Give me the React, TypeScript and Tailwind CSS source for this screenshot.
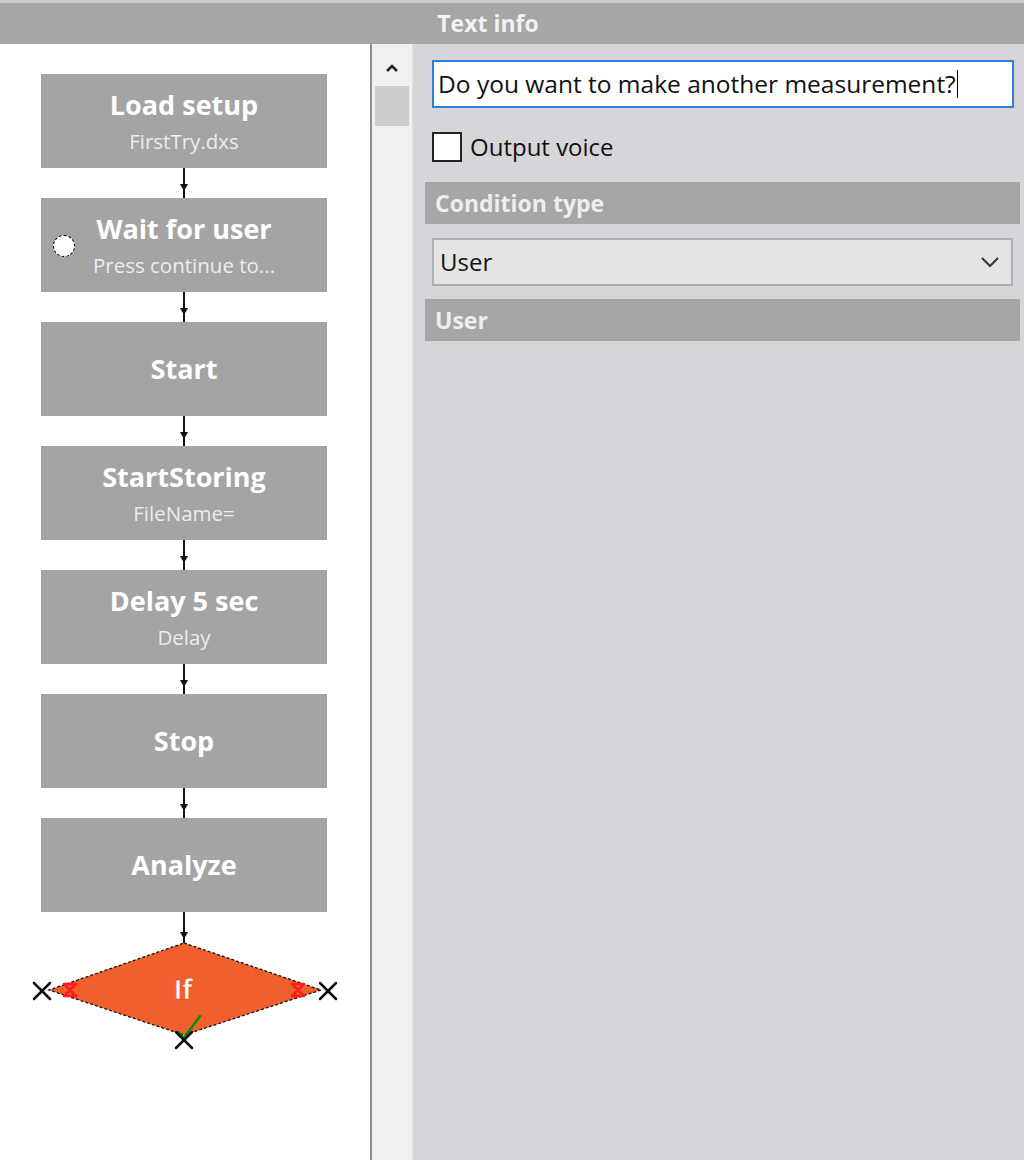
import React from 'react';

type Step = {
  title: string;
  sub?: string;
  dot?: boolean;
};

const steps: Step[] = [
  { title: 'Load setup', sub: 'FirstTry.dxs' },
  { title: 'Wait for user', sub: 'Press continue to...', dot: true },
  { title: 'Start' },
  { title: 'StartStoring', sub: 'FileName=' },
  { title: 'Delay 5 sec', sub: 'Delay' },
  { title: 'Stop' },
  { title: 'Analyze' },
];

function Connector() {
  return (
    <svg width="370" height="30" viewBox="0 0 370 30" className="block">
      <line x1="184" y1="0" x2="184" y2="30" stroke="#111" strokeWidth="2" />
      <path d="M180 16 L188 16 L184 23 Z" fill="#111" />
    </svg>
  );
}

function StepBox({ step }: { step: Step }) {
  return (
    <div className="relative ml-[41px] flex h-[94px] w-[286px] flex-col items-center justify-center bg-[#a4a4a4] text-white">
      {step.dot && (
        <span className="absolute left-[12px] top-[37px] h-[22px] w-[22px] rounded-full border border-dashed border-black bg-white" />
      )}
      <div className="text-[27px] font-bold leading-[32px]">{step.title}</div>
      {step.sub && <div className="mt-[8px] text-[20.5px] leading-[24px] text-[#ececec]">{step.sub}</div>}
    </div>
  );
}

function Cross({ x, y, color = '#111', size = 9 }: { x: number; y: number; color?: string; size?: number }) {
  return (
    <g stroke={color} strokeWidth="2.5" strokeLinecap="round">
      <line x1={x - size} y1={y - size} x2={x + size} y2={y + size} />
      <line x1={x - size} y1={y + size} x2={x + size} y2={y - size} />
    </g>
  );
}

function Decision() {
  // origin at y = 912 of the page
  return (
    <svg width="370" height="140" viewBox="0 0 370 140" className="block">
      <line x1="184" y1="0" x2="184" y2="31" stroke="#111" strokeWidth="2" />
      <path d="M180 20 L188 20 L184 27 Z" fill="#111" />
      <path
        d="M184 31 L321 78 L184 123 L49 78 Z"
        fill="#f0602d"
        stroke="#111"
        strokeWidth="1.3"
        strokeDasharray="3 2"
      />
      <text
        x="183"
        y="87"
        textAnchor="middle"
        fill="#fff"
        stroke="#e04010"
        strokeWidth="0.6"
        fontSize="26"
        fontWeight="700"
        fontFamily="'Open Sans', sans-serif"
      >
        If
      </text>
      {/* red hourglass markers */}
      <path d="M64 72 L76 72 L64 84 L76 84 Z" fill="none" stroke="#ff1a1a" strokeWidth="2.5" strokeLinejoin="round" />
      <path d="M292 72 L304 72 L292 84 L304 84 Z" fill="none" stroke="#ff1a1a" strokeWidth="2.5" strokeLinejoin="round" />
      {/* green check */}
      <path d="M178 120 L184 126 L200 104" fill="none" stroke="#0a8a0a" strokeWidth="2.5" strokeLinecap="round" />
      <Cross x={42} y={79} size={8} />
      <Cross x={328} y={79} size={8} />
      <Cross x={184} y={128} size={8} />
    </svg>
  );
}

function SectionHeader({ label }: { label: string }) {
  return (
    <div className="ml-[12px] mr-[4px] flex h-[42px] items-center bg-[#a6a6a6] pl-[10px] text-[23px] font-bold text-[#eeeeee]">
      {label}
    </div>
  );
}

export default function App() {
  return (
    <div
      className="flex h-[1160px] w-[1024px] flex-col overflow-hidden bg-white"
      style={{ fontFamily: "'Open Sans', 'Noto Sans', sans-serif" }}
    >
      {/* title bar */}
      <div className="flex h-[44px] shrink-0 items-center justify-center border-t-[3px] border-[#c9c9c9] bg-[#a6a6a6]">
        <span className="ml-[-48px] text-[23px] font-bold text-[#f2f2f2]">Text info</span>
      </div>

      <div className="flex min-h-0 flex-1">
        {/* flow chart */}
        <div className="w-[370px] shrink-0 bg-white pt-[30px]">
          {steps.map((s, i) => (
            <div key={s.title}>
              <StepBox step={s} />
              {i < steps.length - 1 && <Connector />}
            </div>
          ))}
          <Decision />
        </div>
        <div className="w-[2px] shrink-0 bg-[#8f8f8f]" />

        {/* scrollbar */}
        <div className="flex w-[41px] shrink-0 flex-col items-center border-r border-[#e2e2e2] bg-[#f0f0f0]">
          <svg width="16" height="12" viewBox="0 0 16 12" className="mt-[18px]">
            <path d="M3 9 L8 4 L13 9" fill="none" stroke="#222" strokeWidth="2.5" />
          </svg>
          <div className="mt-[12px] h-[40px] w-[34px] bg-[#cdcdcd]" />
        </div>

        {/* properties */}
        <div className="flex-1 bg-[#d7d5d9] pt-[16px]">
          <div className="ml-[19px] mr-[10px] flex h-[48px] items-center border-2 border-[#2f7fe0] bg-white pl-[4px] text-[24.5px] text-[#111]">
            Do you want to make another measurement?
            <span className="ml-[1px] h-[28px] w-[1.5px] bg-black" />
          </div>

          <label className="ml-[19px] mt-[24px] flex h-[30px] items-center gap-[8px] text-[24px] text-[#111]">
            <span className="h-[30px] w-[30px] shrink-0 border-2 border-[#222] bg-white" />
            Output voice
          </label>

          <div className="mt-[20px]">
            <SectionHeader label="Condition type" />
          </div>

          <div className="ml-[19px] mr-[11px] mt-[14px] flex h-[48px] items-center justify-between border-2 border-[#b0b0b0] bg-[#e4e4e4] pl-[6px] pr-[10px] text-[24px] text-[#111]">
            <span>User</span>
            <svg width="22" height="14" viewBox="0 0 22 14">
              <path d="M3 3 L11 11 L19 3" fill="none" stroke="#333" strokeWidth="2" />
            </svg>
          </div>

          <div className="mt-[13px]">
            <SectionHeader label="User" />
          </div>
        </div>
      </div>
    </div>
  );
}
